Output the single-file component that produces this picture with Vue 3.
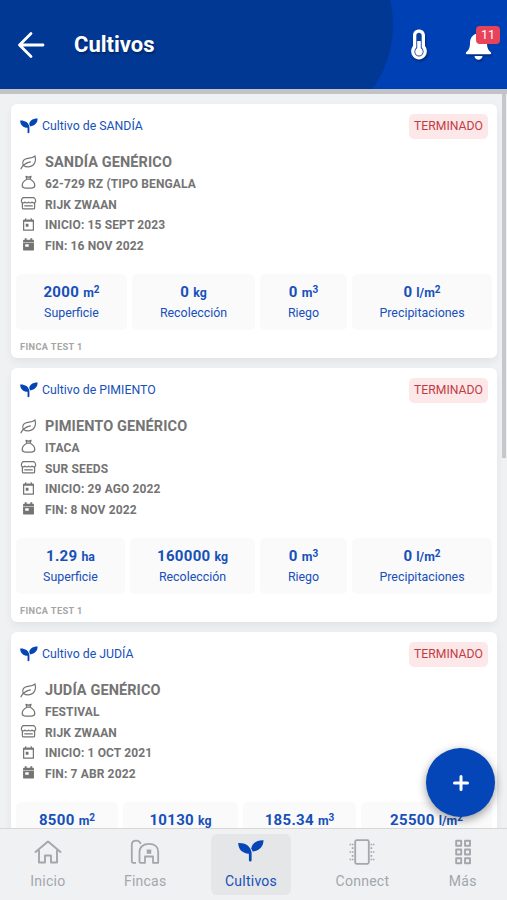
<script setup>
import { ref } from "vue";

const unread = ref(11);
const activeTab = ref("Cultivos");

const crops = ref([
  {
    id: 1,
    crop: "SANDÍA",
    name: "SANDÍA GENÉRICO",
    variety: "62-729 RZ (TIPO BENGALA",
    brand: "RIJK ZWAAN",
    start: "15 SEPT 2023",
    end: "16 NOV 2022",
    farm: "FINCA TEST 1",
    stats: [
      { value: "2000", unit: "m", exp: "2", label: "Superficie", size: 111 },
      { value: "0", unit: "kg", label: "Recolección", size: 123 },
      { value: "0", unit: "m", exp: "3", label: "Riego", size: 87 },
      { value: "0", unit: "l/m", exp: "2", label: "Precipitaciones", size: 140 },
    ],
  },
  {
    id: 2,
    crop: "PIMIENTO",
    name: "PIMIENTO GENÉRICO",
    variety: "ITACA",
    brand: "SUR SEEDS",
    start: "29 AGO 2022",
    end: "8 NOV 2022",
    farm: "FINCA TEST 1",
    stats: [
      { value: "1.29", unit: "ha", label: "Superficie", size: 109 },
      { value: "160000", unit: "kg", label: "Recolección", size: 125 },
      { value: "0", unit: "m", exp: "3", label: "Riego", size: 87 },
      { value: "0", unit: "l/m", exp: "2", label: "Precipitaciones", size: 140 },
    ],
  },
  {
    id: 3,
    crop: "JUDÍA",
    name: "JUDÍA GENÉRICO",
    variety: "FESTIVAL",
    brand: "RIJK ZWAAN",
    start: "1 OCT 2021",
    end: "7 ABR 2022",
    farm: "FINCA TEST 1",
    stats: [
      { value: "8500", unit: "m", exp: "2", label: "Superficie", size: 102 },
      { value: "10130", unit: "kg", label: "Recolección", size: 115 },
      { value: "185.34", unit: "m", exp: "3", label: "Riego", size: 113 },
      { value: "25500", unit: "l/m", exp: "2", label: "Precipitaciones", size: 131 },
    ],
  },
]);

const tabs = [
  { label: "Inicio", icon: "home" },
  { label: "Fincas", icon: "farm" },
  { label: "Cultivos", icon: "sprout" },
  { label: "Connect", icon: "chip" },
  { label: "Más", icon: "more" },
];

function columns(stats) {
  return stats.map((s) => `minmax(0, ${s.size}fr)`).join(" ");
}
</script>

<template>
  <div class="app">
    <svg class="sprite" aria-hidden="true">
      <symbol id="sprout" viewBox="0 0 26 22">
        <path
          d="M0.200 3C6.500 2.600 12.800 5.500 13.600 12.800V20.200Q13.600 21.500 12.200 21.500Q10.900 21.500 10.900 20.200V13.700C4.500 13.300 0.300 9.500 0.200 3Z"
          fill="currentColor"
        />
        <path d="M25.500 0.300C19 0 14 3.200 13.300 8.200L14.600 11.600C21.500 10.800 25.400 6.500 25.500 0.300Z" fill="currentColor" />
      </symbol>
      <symbol id="leaf" viewBox="0 0 18 16">
        <path
          d="M1 14.700C2.200 11.800 4.500 8.800 11 7.300M3.300 11C1.500 6.500 4.500 4 8.500 3.600C12 3.300 14 3 16 1C17.500 6.500 15.300 11.800 10.200 12.500C7.500 12.900 5.500 12.500 4 11.500"
          fill="none"
          stroke="currentColor"
          stroke-width="1.300"
          stroke-linecap="round"
          stroke-linejoin="round"
        />
      </symbol>
      <symbol id="bag" viewBox="0 0 18 16">
        <path
          d="M6.300 1.500L7.200 4.300H10.800L11.700 1.500L9 2.200ZM7.200 4.500C4.500 6 2.300 8.500 2.300 11C2.300 12.900 3.400 13.900 5.300 13.900H12.700C14.600 13.900 15.700 12.900 15.700 11C15.700 8.500 13.500 6 10.800 4.500"
          fill="none"
          stroke="currentColor"
          stroke-width="1.300"
          stroke-linejoin="round"
        />
      </symbol>
      <symbol id="store" viewBox="0 0 18 16">
        <path
          d="M4 1.700H14C15.500 1.700 16.600 3.800 16.600 5.500C16.600 7.500 13.500 7.700 12.700 6.500C11.800 7.700 9.800 7.700 9 6.500C8.200 7.700 6.200 7.700 5.300 6.500C4.500 7.700 1.400 7.500 1.400 5.500C1.400 3.800 2.500 1.700 4 1.700ZM2.500 7V12.800Q2.500 13.800 3.500 13.800H14.500Q15.500 13.800 15.500 12.800V7M4.500 10.600H13.500"
          fill="none"
          stroke="currentColor"
          stroke-width="1.300"
          stroke-linejoin="round"
        />
      </symbol>
      <symbol id="calendar-start" viewBox="0 0 18 16">
        <path
          d="M3.800 3.500H14.200V14H3.800ZM6 1.300V3.500M12 1.300V3.500"
          fill="none"
          stroke="currentColor"
          stroke-width="1.300"
          stroke-linejoin="round"
        />
        <path d="M4 3H14V5H4ZM6 7.300H9V10.300H6Z" fill="currentColor" />
      </symbol>
      <symbol id="calendar-end" viewBox="0 0 18 16">
        <path
          d="M5 1.200H7V3H11V1.200H13V3H13.800Q14.800 3 14.800 4V5.500H3.200V4Q3.200 3 4.200 3H5ZM3.200 6.200H14.800V13.500Q14.800 14.500 13.800 14.500H4.200Q3.200 14.500 3.200 13.500ZM5.500 7.800V10.300H9.200V7.800Z"
          fill="currentColor"
          fill-rule="evenodd"
        />
      </symbol>
      <symbol id="home" viewBox="0 0 30 26">
        <path
          d="M2.500 13L15 2.500L27.500 13M6 11V23.500H12V16.500H18V23.500H24V11"
          fill="none"
          stroke="currentColor"
          stroke-width="1.900"
          stroke-linecap="round"
          stroke-linejoin="round"
        />
      </symbol>
      <symbol id="farm" viewBox="0 0 30 26">
        <path
          d="M6 23.800H3Q1.800 23.800 1.800 22.600V5.500C1.800 0.500 10.500 0.500 10.500 5M9.500 23.800V13C9.500 8 13.500 4.800 19 4.800C24.500 4.800 28.200 8 28.200 13V23.800H23V17.500H15V23.800H9.500"
          fill="none"
          stroke="currentColor"
          stroke-width="1.800"
          stroke-linejoin="round"
        />
        <path d="M16.700 10.500H21.300V14.800H16.700Z" fill="currentColor" />
      </symbol>
      <symbol id="chip" viewBox="0 0 30 26">
        <rect
          x="8.200"
          y="1.200"
          width="13.600"
          height="23.600"
          rx="1.500"
          fill="none"
          stroke="currentColor"
          stroke-width="1.800"
        />
        <path
          d="M4.800 5.500H6.500M4.800 9.200H6.500M4.800 13H6.500M4.800 16.800H6.500M4.800 20.500H6.500M23.500 5.500H25.200M23.500 9.200H25.200M23.500 13H25.200M23.500 16.800H25.200M23.500 20.500H25.200"
          stroke="currentColor"
          stroke-width="1.700"
        />
        <path
          d="M2.600 5.500H4M2.600 13H4M2.600 20.500H4M26 5.500H27.400M26 13H27.400M26 20.500H27.400"
          stroke="currentColor"
          stroke-width="1.400"
        />
      </symbol>
      <symbol id="more" viewBox="0 0 30 26">
        <path
          d="M8.200 1.700H13.200V6.700H8.200ZM17 1.700H22V6.700H17ZM8.200 10.500H13.200V15.500H8.200ZM17 10.500H22V15.500H17ZM8.200 19.300H13.200V24.300H8.200ZM17 19.300H22V24.300H17Z"
          fill="none"
          stroke="currentColor"
          stroke-width="1.900"
          stroke-linejoin="round"
        />
      </symbol>
    </svg>

    <header class="header">
      <svg class="back" viewBox="0 0 28 28">
        <path
          d="M26 14H3M14 2.500L2.500 14L14 25.500"
          fill="none"
          stroke="#fff"
          stroke-width="2.800"
          stroke-linecap="round"
          stroke-linejoin="round"
        />
      </svg>
      <h1>Cultivos</h1>
      <svg class="thermo" viewBox="0 0 16 31">
        <path
          d="M2 6.500C2 -1.500 14 -1.500 14 6.500V17C18.500 23 14 30.500 8 30.500C2 30.500 -2.500 23 2 17Z"
          fill="#fff"
        />
        <path
          d="M5.300 6.500C5.300 2.800 10.700 2.800 10.700 6.500V18.500C14.500 22 12 27.500 8 27.500C4 27.500 1.500 22 5.300 18.500Z"
          fill="#0b3f9f"
        />
        <path d="M6.200 12H9.800V19.200C13.200 21 12 26.600 8 26.600C4 26.600 2.800 21 6.200 19.200Z" fill="#fff" />
      </svg>
      <div class="bell">
        <svg viewBox="0 0 26 28">
          <path
            d="M13 1.500C7.500 1.500 4.500 6 4.500 11C4.500 17 2.500 18.500 0.500 20.500Q-0.200 22 1.500 22.300H24.500Q26.200 22 25.500 20.500C23.500 18.500 21.500 17 21.500 11C21.500 6 18.500 1.500 13 1.500ZM9 24H17C16.500 29 9.500 29 9 24Z"
            fill="#fff"
          />
        </svg>
        <span class="badge">{{ unread }}</span>
      </div>
    </header>

    <main class="list">
      <article v-for="c in crops" :key="c.id" class="card">
        <div class="card-top">
          <svg class="sprout"><use href="#sprout" /></svg>
          <span class="crop">Cultivo de {{ c.crop }}</span>
          <span class="state">TERMINADO</span>
        </div>
        <ul class="info">
          <li class="name">
            <svg><use href="#leaf" /></svg><span>{{ c.name }}</span>
          </li>
          <li>
            <svg><use href="#bag" /></svg><span>{{ c.variety }}</span>
          </li>
          <li>
            <svg><use href="#store" /></svg><span>{{ c.brand }}</span>
          </li>
          <li>
            <svg><use href="#calendar-start" /></svg><span>INICIO: {{ c.start }}</span>
          </li>
          <li>
            <svg><use href="#calendar-end" /></svg><span>FIN: {{ c.end }}</span>
          </li>
        </ul>
        <div class="stats" :style="{ gridTemplateColumns: columns(c.stats) }">
          <div v-for="s in c.stats" :key="s.label" class="stat">
            <div class="value">
              {{ s.value }} <small>{{ s.unit }}<sup v-if="s.exp">{{ s.exp }}</sup></small>
            </div>
            <div class="label">{{ s.label }}</div>
          </div>
        </div>
        <div class="farm">{{ c.farm }}</div>
      </article>
      <div class="scrollbar"></div>
    </main>

    <button class="fab" type="button">
      <svg viewBox="0 0 16 16">
        <path d="M8 1.500V14.500M1.500 8H14.500" stroke="#fff" stroke-width="3" stroke-linecap="round" />
      </svg>
    </button>

    <nav class="tabs">
      <a
        v-for="t in tabs"
        :key="t.label"
        :class="{ active: t.label === activeTab }"
        @click="activeTab = t.label"
      >
        <svg><use :href="'#' + t.icon" /></svg>
        <span>{{ t.label }}</span>
      </a>
    </nav>
  </div>
</template>

<style>
body {
  margin: 0;
  overflow: hidden;
}
</style>

<style scoped>
.app {
  position: relative;
  display: flex;
  flex-direction: column;
  height: 900px;
  overflow: hidden;
  background: #eff1f3;
  font-family: Roboto, "Liberation Sans", sans-serif;
}

.sprite {
  position: absolute;
  width: 0;
  height: 0;
}

.header {
  display: flex;
  align-items: center;
  flex: none;
  box-sizing: border-box;
  height: 94px;
  padding: 0 7px 0 17px;
  border-bottom: 5px solid #c1c3c6;
  background:
    linear-gradient(#003894, #003894) 0 0 / 283px 100% no-repeat,
    radial-gradient(circle at 283px 25px, #003894 109.5px, #0040b5 110.5px);
}

.back {
  width: 28px;
  height: 28px;
}

h1 {
  flex: 1;
  margin: 0 0 0 29px;
  color: #fff;
  font-size: 22px;
  font-weight: 700;
  line-height: 30px;
  text-shadow: 1px 2px 2px rgba(0, 0, 0, 0.3);
}

.thermo {
  width: 16px;
  height: 31px;
  margin-right: 38px;
  filter: drop-shadow(1px 2px 1px rgba(0, 0, 0, 0.3));
}

.bell {
  position: relative;
  width: 35px;
  height: 28px;
}

.bell svg {
  display: block;
  width: 27px;
  height: 28px;
  margin-top: 1px;
  filter: drop-shadow(1px 2px 1px rgba(0, 0, 0, 0.3));
}

.badge {
  position: absolute;
  top: -5px;
  right: 0;
  width: 24px;
  height: 18px;
  border-radius: 4px;
  background: #e9435a;
  color: #fff;
  font-size: 12.5px;
  line-height: 18px;
  text-align: center;
}

.list {
  position: relative;
  flex: 1;
  min-height: 0;
  padding: 10px 10px 0 11px;
  overflow: hidden;
}

.card {
  box-sizing: border-box;
  height: 254px;
  margin-bottom: 10px;
  padding: 9px 5px 0;
  border-radius: 6px;
  background: #fff;
  box-shadow: 0 4px 8px rgba(0, 0, 0, 0.06);
}

.card-top {
  display: flex;
  align-items: center;
  height: 26px;
  padding: 0 4px;
  color: #1650b8;
}

.sprout {
  width: 18px;
  height: 16px;
  color: #0645b5;
}

.crop {
  flex: 1;
  margin-left: 4px;
  font-size: 12.3px;
}

.state {
  width: 79px;
  height: 25px;
  border-radius: 5px;
  background: #fde8e9;
  color: #c13c44;
  font-size: 12.2px;
  line-height: 25px;
  text-align: center;
}

.info {
  margin: 12px 0 0;
  padding: 0 4px;
  list-style: none;
  color: #747474;
  font-size: 12px;
  font-weight: 700;
  letter-spacing: 0.13px;
}

.info li {
  display: flex;
  align-items: center;
  height: 20.7px;
}

.info svg {
  width: 17px;
  height: 15px;
  margin-right: 8px;
}

.info .name {
  height: 22.5px;
  font-size: 14.5px;
  letter-spacing: 0.1px;
}

.info li:not(.name) svg {
  position: relative;
  top: -1px;
}

.stats {
  display: grid;
  gap: 5px;
  margin-top: 17.7px;
}

.stat {
  height: 56px;
  border-radius: 5px;
  background: #fafafb;
  color: #1650b8;
  text-align: center;
}

.value {
  height: 28px;
  padding-top: 3px;
  font-size: 15px;
  font-weight: 700;
  line-height: 30px;
  letter-spacing: 0.3px;
  white-space: nowrap;
}

.value small {
  font-size: 12.3px;
  letter-spacing: 0;
}

.value sup {
  position: relative;
  top: 1px;
  font-size: 10px;
  line-height: 0;
}

.label {
  font-size: 12.4px;
  line-height: 16px;
}

.farm {
  padding: 10px 4px 0;
  color: #a5a5a5;
  font-size: 9.2px;
  font-weight: 700;
  line-height: 14px;
  letter-spacing: 0.4px;
}

.scrollbar {
  position: absolute;
  top: 0;
  right: 1px;
  width: 4px;
  height: 364px;
  background: #c5c7ca;
}

.fab {
  position: absolute;
  top: 748px;
  right: 12px;
  display: flex;
  align-items: center;
  justify-content: center;
  width: 69px;
  height: 69px;
  padding: 0;
  border: 0;
  border-radius: 50%;
  background: #0445b7;
  box-shadow: 0 3px 10px rgba(0, 0, 0, 0.4);
}

.fab svg {
  width: 16px;
  height: 16px;
}

.tabs {
  display: flex;
  justify-content: space-around;
  flex: none;
  box-sizing: border-box;
  height: 72px;
  padding: 5px 0 0 1px;
  border-top: 1px solid #d5d7d9;
  background: #eff1f3;
}

.tabs a {
  display: flex;
  flex-direction: column;
  align-items: center;
  box-sizing: border-box;
  height: 61px;
  padding: 5px 14px 0;
  border-radius: 6px;
  color: #a3a7ab;
  font-size: 14px;
  letter-spacing: 0.25px;
}

.tabs svg {
  width: 30px;
  height: 26px;
}

.tabs span {
  margin-top: 7px;
  line-height: 18px;
}

.tabs .active {
  background: #e4e6e8;
  color: #1650b8;
}

.tabs .active svg {
  height: 22px;
  margin: 1px 0 3px;
  color: #0445b7;
}
</style>
